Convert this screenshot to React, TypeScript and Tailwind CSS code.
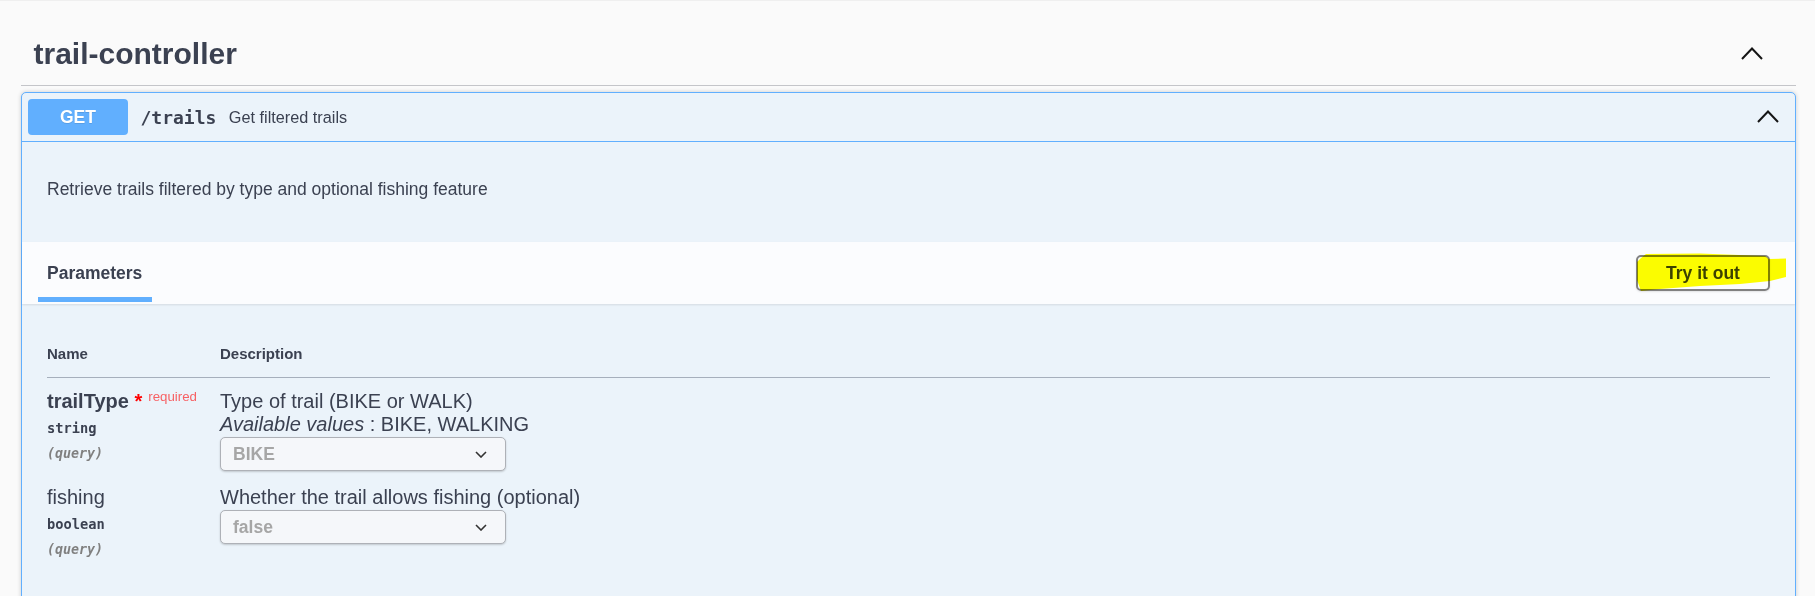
const sans = "font-['Liberation_Sans',Arial,sans-serif]"
const mono = "font-['DejaVu_Sans_Mono','Liberation_Mono',monospace]"

type Param = {
  name: string
  required?: boolean
  type: string
  desc: string
  values?: string
  value: string
}

const params: Param[] = [
  {
    name: 'trailType',
    required: true,
    type: 'string',
    desc: 'Type of trail (BIKE or WALK)',
    values: 'BIKE, WALKING',
    value: 'BIKE',
  },
  {
    name: 'fishing',
    type: 'boolean',
    desc: 'Whether the trail allows fishing (optional)',
    value: 'false',
  },
]

function ChevronUp({ className = '' }: { className?: string }) {
  return (
    <svg width="22" height="13" viewBox="0 0 22 13" className={className}>
      <polyline points="1,12 11,1.5 21,12" fill="none" stroke="#151515" strokeWidth="2" />
    </svg>
  )
}

function SelectBox({ value }: { value: string }) {
  return (
    <div className="mt-[1px] flex h-[34px] w-[286px] items-center justify-between rounded-[5px] border border-[#aeb1b7] bg-[#f5f7fa] pl-[12px] pr-[18px] shadow-[0_1px_2px_rgba(0,0,0,0.18)]">
      <span className="text-[17.5px] font-bold text-[#a6a6a6]">{value}</span>
      <svg width="12" height="7" viewBox="0 0 12 7">
        <polyline points="1,1 6,6 11,1" fill="none" stroke="#333" strokeWidth="1.6" />
      </svg>
    </div>
  )
}

function ParamRow({ p }: { p: Param }) {
  return (
    <div className="flex pb-[3px] pt-[12px]">
      <div className="w-[173px] shrink-0">
        <div className="h-[23px] text-[20px] leading-[23px] whitespace-nowrap">
          {p.required ? (
            <>
              <span className="font-bold">{p.name}</span>
              <span className="font-bold text-[#ff0000]">&nbsp;*</span>
              {/* swagger's ::after "required" tag, nudged up */}
              <span className="relative -top-[7.5px] px-[6px] text-[13.3px] text-[#f76164]">required</span>
            </>
          ) : (
            <span>{p.name}</span>
          )}
        </div>
        <div className={`${mono} pb-[6px] pt-[7px] text-[13.7px] font-bold leading-[17px]`}>{p.type}</div>
        <div className={`${mono} pt-[2px] text-[13.3px] font-bold italic leading-[17px] text-[#808080]`}>
          (query)
        </div>
      </div>
      <div className="flex-1">
        <div className="text-[20px] leading-[23px]">{p.desc}</div>
        {p.values && (
          <div className="text-[20px] leading-[23px]">
            <i>Available values</i> : {p.values}
          </div>
        )}
        <SelectBox value={p.value} />
      </div>
    </div>
  )
}

export default function App() {
  return (
    <div className={`${sans} min-h-screen border-t border-[#efefef] bg-[#fafafa] pl-[21px] pr-[19px] text-[#3b4151]`}>
      <div className="flex items-center justify-between border-b border-[#c4c5c9] pb-[13px] pl-[12.5px] pr-[33px] pt-[35px]">
        <h3 className="text-[30px] font-bold leading-[36px]">trail-controller</h3>
        <ChevronUp className="mb-[2px]" />
      </div>

      <div className="mt-[6px] rounded-[5px] border border-[#61affe] bg-[#ebf3fa] shadow-[0_0_4px_rgba(0,0,0,0.19)]">
        <div className="flex items-center border-b border-[#61affe] p-[6px]">
          <div className="flex h-[36px] w-[100px] items-center justify-center rounded-[4px] bg-[#61affe] text-[17.5px] font-bold text-white [text-shadow:0_1px_0_rgba(0,0,0,0.1)]">
            GET
          </div>
          <span className={`${mono} px-[12.5px] text-[18px] font-bold`}>/trails</span>
          <span className="text-[16.25px]">Get filtered trails</span>
          <ChevronUp className="mb-[2px] ml-auto mr-[10px]" />
        </div>

        <div className="pb-[42.7px] pl-[25px] pt-[37px] text-[17.5px] leading-[20px]">
          Retrieve trails filtered by type and optional fishing feature
        </div>

        <div className="relative flex h-[62.5px] items-center justify-between bg-[#fbfcfe] px-[25px] shadow-[0_1px_2px_rgba(0,0,0,0.1)]">
          <span className="relative text-[17.5px] font-bold leading-[20px]">
            Parameters
            <span className="absolute left-[-9px] top-[34px] h-[5px] w-[114px] bg-[#61affe]" />
          </span>
          <button className="h-[36.5px] w-[134px] rounded-[5px] border-2 border-[#808080] text-[17.5px] font-bold text-[#3b4151] shadow-[0_1px_2px_rgba(0,0,0,0.1)]">
            Try it out
          </button>
          {/* highlighter mark over the button */}
          <svg
            width="160"
            height="45"
            viewBox="0 0 160 45"
            className="pointer-events-none absolute left-[1608px] top-[8px] mix-blend-multiply"
          >
            <polygon
              points="16,4 70,3.5 135,6 139,9 156,8.5 156,27 140,31 110,34 70,36 30,39 11,41 7,30 7,12 11,8"
              fill="#ffff00"
            />
          </svg>
        </div>

        <div className="px-[25px] pb-[60px] pt-[26px]">
          <div className="flex border-b border-[#a6afbc] pb-[15px] pt-[15px] text-[15px] font-bold leading-[17px]">
            <div className="w-[173px]">Name</div>
            <div>Description</div>
          </div>
          {params.map((p) => (
            <ParamRow key={p.name} p={p} />
          ))}
        </div>
      </div>
    </div>
  )
}
